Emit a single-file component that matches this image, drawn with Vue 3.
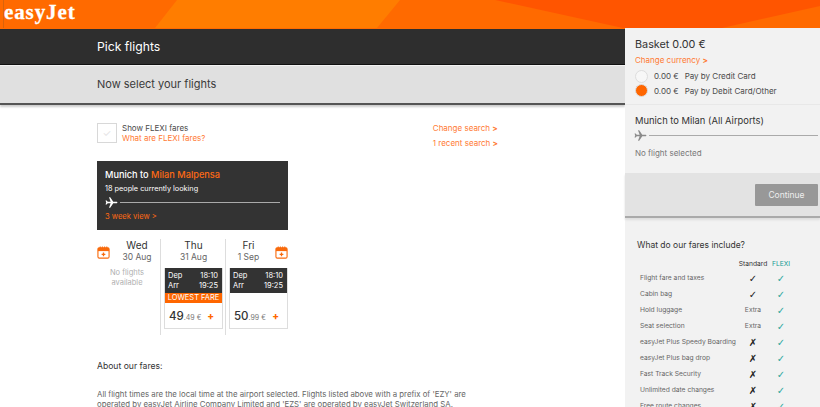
<template>
  <div class="page">
    <header class="topbar">
      <svg class="swoosh" viewBox="0 0 820 28" preserveAspectRatio="none">
        <polygon points="155,28 177,0 400,0 377,28" fill="#ff7d00" />
        <polygon points="495,0 820,0 820,6 722,28 623,28" fill="#ff5500" />
      </svg>
      <span class="logo">easyJet</span>
    </header>

    <div class="layout">
      <main class="main">
        <div class="titlebar"><h1>Pick flights</h1></div>
        <div class="subbar"><h2>Now select your flights</h2></div>

        <div class="content">
          <div class="options">
            <div class="flexi">
              <span class="checkbox">&#10003;</span>
              <div>
                <p>Show FLEXI fares</p>
                <a>What are FLEXI fares?</a>
              </div>
            </div>
            <div class="search-links">
              <a>Change search <b>&gt;</b></a>
              <a>1 recent search <b>&gt;</b></a>
            </div>
          </div>

          <section class="route">
            <h3>Munich to <span>Milan Malpensa</span></h3>
            <p>18 people currently looking</p>
            <div class="plane-line">
              <svg class="plane" viewBox="0 0 24 24"><path :d="planePath" fill="#fff" /></svg>
              <i></i>
            </div>
            <a>3 week view &gt;</a>
          </section>

          <div class="days">
            <div v-for="day in days" :key="day.name" class="day" :class="day.cls">
              <svg v-if="day.cal" class="cal" viewBox="0 0 14 14">
                <rect x="1" y="2" width="12" height="11" rx="1.5" fill="#fff" stroke="#f96a0c" stroke-width="1.2" />
                <rect x="1" y="2" width="12" height="3.5" fill="#f96a0c" />
                <path d="M3.5 .5v2M5.8 .5v2M8.2 .5v2M10.5 .5v2" stroke="#f96a0c" stroke-width="1" />
                <path d="M7 7v4M5 9h4" stroke="#f96a0c" stroke-width="1.4" />
              </svg>
              <div class="day-head">
                <div class="day-name">{{ day.name }}</div>
                <div class="day-date">{{ day.date }}</div>
              </div>
              <div v-if="!day.flight" class="none">No flights<br />available</div>
              <div v-else class="fare">
                <div class="times">
                  <div><span>Dep</span><span>18:10</span></div>
                  <div><span>Arr</span><span>19:25</span></div>
                </div>
                <div class="lowest">{{ day.lowest ? 'LOWEST FARE' : '' }}</div>
                <div class="price">
                  <strong>{{ day.whole }}</strong><small>.{{ day.cents }} €</small>
                  <b class="plus">+</b>
                </div>
              </div>
            </div>
          </div>

          <h4 class="about">About our fares:</h4>
          <p class="legal">
            All flight times are the local time at the airport selected. Flights listed above with a prefix of 'EZY' are
            operated by easyJet Airline Company Limited and 'EZS' are operated by easyJet Switzerland SA.
          </p>
        </div>
      </main>

      <aside class="side">
        <div class="basket">
          <h3>Basket 0.00 €</h3>
          <a>Change currency <b>&gt;</b></a>
          <div class="pay"><span class="radio"></span><em>0.00 €</em>Pay by Credit Card</div>
          <div class="pay"><span class="radio on"></span><em>0.00 €</em>Pay by Debit Card/Other</div>
        </div>
        <div class="trip">
          <h3>Munich to Milan (All Airports)</h3>
          <div class="plane-line">
            <svg class="plane" viewBox="0 0 24 24"><path :d="planePath" fill="#8a8a8a" /></svg>
            <i></i>
          </div>
          <p>No flight selected</p>
        </div>
        <div class="continue"><button>Continue</button></div>
        <div class="include">
          <h3>What do our fares include?</h3>
          <div class="row head"><span></span><span class="col">Standard</span><span class="col flexi-col">FLEXI</span></div>
          <div v-for="row in fares" :key="row[0]" class="row">
            <span>{{ row[0] }}</span>
            <span class="col" :class="{ mark: row[1] !== 'Extra' }">{{ row[1] }}</span>
            <span class="col flexi-col mark">✓</span>
          </div>
        </div>
      </aside>
    </div>
  </div>
</template>

<script setup>
const planePath = "M23 12c0-.9-1-1.4-2.2-1.4h-5.6L9.6 2.5H7.4l3 8.1H5L3 8.200H1l1.200 3.800L1 15.800h2l2-2.400h5.400l-3 8.100h2.200l5.600-8.100h5.600C22 13.400 23 12.900 23 12z";

const days = [
  { name: "Wed", date: "30 Aug", cls: "wed", cal: true },
  { name: "Thu", date: "31 Aug", cls: "thu", flight: true, lowest: true, whole: "49", cents: "49" },
  { name: "Fri", date: "1 Sep", cls: "fri", cal: true, flight: true, whole: "50", cents: "99" },
];

const fares = [
  ["Flight fare and taxes", "✓"],
  ["Cabin bag", "✓"],
  ["Hold luggage", "Extra"],
  ["Seat selection", "Extra"],
  ["easyJet Plus Speedy Boarding", "✗"],
  ["easyJet Plus bag drop", "✗"],
  ["Fast Track Security", "✗"],
  ["Unlimited date changes", "✗"],
  ["Free route changes", "✗"],
];
</script>

<style>
html,
body {
  margin: 0;
  overflow: hidden;
  background: #fff;
}
</style>

<style scoped>
.page {
  height: 407px;
  overflow: hidden;
  font-family: Inter, "Open Sans", sans-serif;
  color: #4a4a4a;
}
h1, h2, h3, h4, p {
  margin: 0;
  font-weight: 400;
}
a {
  color: #ff7a33;
}
.topbar {
  position: relative;
  height: 28px;
  background: #ff6a00;
  overflow: hidden;
}
.swoosh {
  position: absolute;
  inset: 0;
  width: 100%;
  height: 100%;
}
.logo {
  position: relative;
  display: block;
  height: 28px;
  margin-left: 3px;
  border-left: 1px solid #d9630a;
  font-family: "Liberation Serif", serif;
  font-weight: 700;
  font-size: 21px;
  letter-spacing: 0.9px;
  line-height: 24px;
  color: #fff;
  -webkit-text-stroke: 0.3px #fff;
}
.layout {
  display: flex;
  height: 379px;
}
.main {
  flex: 1;
  min-width: 0;
}
.titlebar {
  height: 35px;
  padding-left: 97px;
  background: #2e2e2e;
  border-top: 1px solid #ff6a00;
  border-bottom: 1px solid #111;
}
.titlebar h1 {
  font-size: 12.2px;
  line-height: 36px;
  color: #fff;
}
.subbar {
  height: 37px;
  padding-left: 97px;
  background: #e0e0e0;
  border-top: 1px solid #f2f2f2;
  border-bottom: 2px solid #555;
  box-shadow: 0 2px 2px #ccc;
}
.subbar h2 {
  font-size: 11px;
  line-height: 36px;
  color: #3a3a3a;
}
.content {
  padding: 18px 0 0 97px;
}
.options {
  display: flex;
  justify-content: space-between;
  width: 401px;
  height: 20px;
  font-size: 8px;
}
.flexi {
  display: flex;
  gap: 5px;
}
.flexi p {
  line-height: 10px;
}
.flexi a {
  display: block;
  line-height: 10px;
}
.checkbox {
  width: 18px;
  height: 18px;
  border: 1px solid #d8d8d8;
  color: #e4e4e4;
  font-size: 10px;
  text-align: center;
  line-height: 18px;
}
.search-links {
  display: flex;
  flex-direction: column;
  gap: 5px;
}
.search-links a {
  line-height: 10px;
}
.route {
  width: 191px;
  height: 69px;
  margin-top: 18px;
  padding: 8px 8px 0;
  box-sizing: border-box;
  background: #333;
  color: #fff;
}
.route h3 {
  font-size: 9.2px;
  font-weight: 500;
  line-height: 12px;
}
.route h3 span,
.route a {
  color: #ff6a13;
}
.route p {
  font-size: 7.3px;
  line-height: 10px;
  margin-top: 3px;
}
.route a {
  display: block;
  font-size: 7.6px;
  line-height: 10px;
  margin-top: 3px;
}
.plane-line {
  display: flex;
  align-items: center;
  gap: 2px;
}
.plane {
  width: 13px;
  height: 13px;
}
.plane-line i {
  flex: 1;
  height: 1px;
  background: #aaa;
}
.route .plane-line {
  margin: 2px 0;
}
.days {
  display: flex;
  margin-top: 9px;
  height: 96px;
}
.day {
  position: relative;
  box-sizing: border-box;
}
.day-head {
  text-align: center;
}
.wed {
  width: 63px;
  padding-right: 3px;
}
.wed .day-head {
  padding-left: 20px;
}
.thu {
  width: 65px;
  padding: 0 2px 0 3px;
  border-left: 1px solid #ddd;
}
.fri {
  width: 63px;
  padding-left: 3px;
  border-left: 1px solid #ddd;
}
.fri .day-head {
  padding-right: 20px;
}
.cal {
  position: absolute;
  top: 7px;
  width: 13px;
  height: 13px;
}
.wed .cal {
  left: 0;
}
.fri .cal {
  right: 0;
}
.day-name {
  font-size: 10px;
  line-height: 13px;
  color: #333;
}
.day-date {
  font-size: 8.5px;
  line-height: 11px;
  color: #666;
}
.none {
  font-size: 7.5px;
  line-height: 10px;
  color: #b0b0b0;
  margin-top: 5px;
  text-align: center;
}
.fare {
  margin-top: 5px;
  border: 1px solid #ddd;
  border-top: 0;
}
.times {
  background: #333;
  color: #fff;
  font-size: 7.5px;
  line-height: 10px;
  padding: 3px 4px 2px 3px;
}
.times div {
  display: flex;
  justify-content: space-between;
}
.lowest {
  height: 10px;
  background: #ff6600;
  color: #fff;
  font-size: 7.5px;
  line-height: 10px;
  text-align: center;
}
.fri .lowest {
  background: none;
}
.price {
  display: flex;
  align-items: baseline;
  height: 25px;
  padding: 6px 0 0 4px;
  box-sizing: border-box;
}
.price strong {
  font-weight: 500;
  font-size: 11.5px;
  color: #333;
}
.price small {
  font-size: 7px;
  color: #777;
}
.plus {
  margin-left: auto;
  margin-right: 8px;
  font-size: 10px;
  font-weight: 800;
  color: #ff6600;
}
.about {
  margin-top: 25px;
  font-size: 8.6px;
  line-height: 12px;
  color: #333;
}
.legal {
  width: 385px;
  margin-top: 17px;
  font-size: 7.8px;
  line-height: 10px;
  color: #666;
}
.side {
  width: 195px;
  flex: none;
  background: #f2f2f2;
  font-size: 8px;
}
.basket {
  padding: 10px 10px 6px;
  border-bottom: 1px solid #e8e8e8;
}
.basket h3 {
  font-size: 10.8px;
  line-height: 14px;
  color: #333;
}
.basket a {
  display: block;
  line-height: 10px;
  margin: 3px 0 4px;
}
.pay {
  display: flex;
  align-items: center;
  height: 14.5px;
}
.pay em {
  font-style: normal;
  margin-right: 6px;
}
.radio {
  width: 13px;
  height: 13px;
  box-sizing: border-box;
  margin-right: 6px;
  border: 1px solid #ddd;
  border-radius: 50%;
  background: #f7f7f7;
}
.radio.on {
  background: #ff6600;
}
.trip {
  padding: 10px 2px 0 10px;
  height: 68px;
  box-sizing: border-box;
}
.trip h3 {
  font-size: 9.4px;
  line-height: 12px;
  color: #333;
}
.trip .plane-line {
  margin: 2px 0 0 -1px;
}
.trip p {
  color: #777;
  line-height: 10px;
  margin-top: 6px;
}
.continue {
  display: flex;
  justify-content: flex-end;
  align-items: center;
  height: 43px;
  padding-right: 2px;
  background: #e3e3e3;
  border-bottom: 2px solid #aaa;
  box-shadow: 0 2px 2px #ddd;
}
.continue button {
  width: 63px;
  height: 22px;
  border: 0;
  border-radius: 1px;
  background: #989898;
  color: #eee;
  font: inherit;
  font-size: 8.5px;
}
.include {
  padding: 21px 26px 0 12px;
}
.include h3 {
  font-size: 8.5px;
  line-height: 12px;
  color: #333;
  margin-bottom: 7px;
}
.row {
  display: flex;
  align-items: center;
  height: 16px;
  padding-left: 3px;
  font-size: 6.7px;
  color: #666;
}
.row span:first-child {
  flex: 1;
}
.col {
  width: 30px;
  text-align: center;
}
.head {
  height: 12px;
  color: #333;
}
.flexi-col {
  width: 26px;
  color: #149c94;
}
.mark {
  font-family: "DejaVu Sans", sans-serif;
  font-size: 10px;
  color: #222;
}
.mark.flexi-col {
  color: #2fa8a0;
}
</style>
